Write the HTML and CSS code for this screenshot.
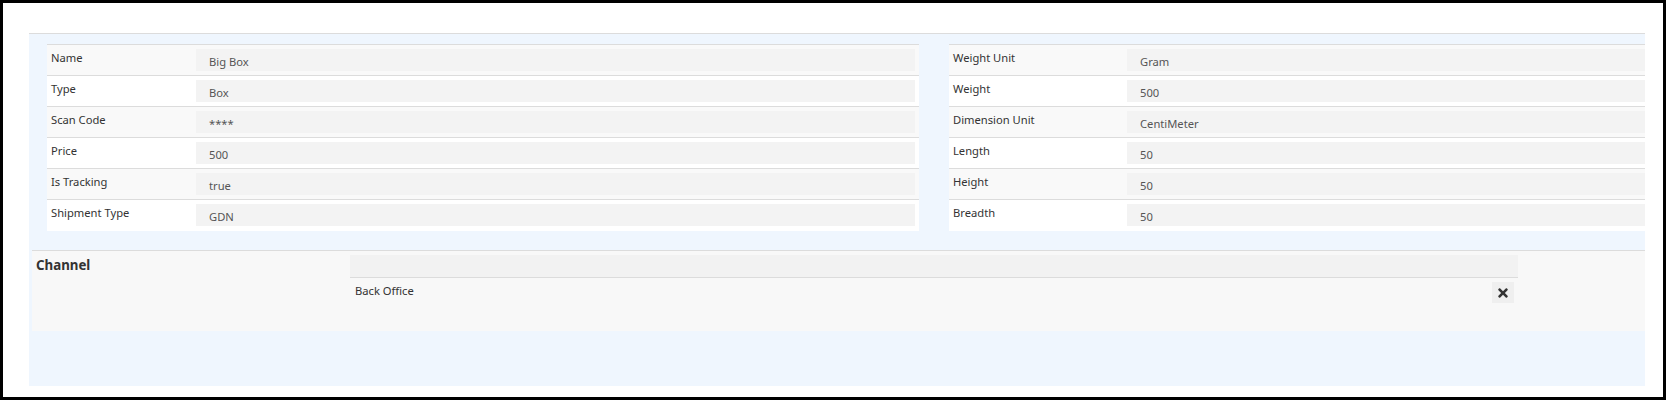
FILE: index.html
```html
<!DOCTYPE html>
<html>
<head>
<meta charset="utf-8">
<link rel="stylesheet" href="styles.css">
</head>
<body>
<div class="frame">
  <div class="panel">
    <div class="details">
      <table class="grid grid-left">
        <tr><td class="lbl">Name</td><td class="val"><div class="box">Big Box</div></td></tr>
        <tr><td class="lbl">Type</td><td class="val"><div class="box">Box</div></td></tr>
        <tr><td class="lbl">Scan Code</td><td class="val"><div class="box">****</div></td></tr>
        <tr><td class="lbl">Price</td><td class="val"><div class="box">500</div></td></tr>
        <tr><td class="lbl">Is Tracking</td><td class="val"><div class="box">true</div></td></tr>
        <tr><td class="lbl">Shipment Type</td><td class="val"><div class="box">GDN</div></td></tr>
      </table>
      <table class="grid grid-right">
        <tr><td class="lbl">Weight Unit</td><td class="val"><div class="box">Gram</div></td></tr>
        <tr><td class="lbl">Weight</td><td class="val"><div class="box">500</div></td></tr>
        <tr><td class="lbl">Dimension Unit</td><td class="val"><div class="box">CentiMeter</div></td></tr>
        <tr><td class="lbl">Length</td><td class="val"><div class="box">50</div></td></tr>
        <tr><td class="lbl">Height</td><td class="val"><div class="box">50</div></td></tr>
        <tr><td class="lbl">Breadth</td><td class="val"><div class="box">50</div></td></tr>
      </table>
    </div>
    <div class="channel">
      <div class="channel-title">Channel</div>
      <div class="channel-table">
        <div class="channel-head"></div>
        <div class="channel-row">
          <span class="channel-name">Back Office</span>
          <button class="remove" type="button" aria-label="Remove">
            <svg viewBox="0 0 352 512" width="10" height="14"><path fill="#333" d="M242.72 256l100.07-100.07c12.28-12.28 12.28-32.19 0-44.48l-22.24-22.24c-12.28-12.28-32.19-12.28-44.48 0L176 189.28 75.93 89.21c-12.28-12.28-32.19-12.28-44.48 0L9.21 111.45c-12.28 12.28-12.28 32.19 0 44.48L109.28 256 9.21 356.07c-12.28 12.28-12.28 32.19 0 44.48l22.24 22.24c12.28 12.28 32.2 12.28 44.48 0L176 322.72l100.07 100.07c12.28 12.28 32.2 12.28 44.48 0l22.24-22.24c12.28-12.28 12.28-32.19 0-44.48L242.72 256z"/></svg>
          </button>
        </div>
      </div>
    </div>
  </div>
</div>
</body>
</html>
```

FILE: styles.css
```css
html, body {
  margin: 0;
  padding: 0;
  background: #fff;
}

body {
  font-family: "Segoe UI", "Noto Sans", "Open Sans", sans-serif;
  color: #333;
}

.frame {
  width: 1666px;
  height: 400px;
  box-sizing: border-box;
  border: 3px solid #000;
  padding: 30px 18px 10px 26px;
}

.panel {
  height: 353px;
  box-sizing: border-box;
  background: #eff6fe;
  border-top: 1px solid #dcdcdc;
  display: flex;
  flex-direction: column;
}

.details {
  display: flex;
  gap: 30px;
  box-sizing: border-box;
  padding: 10px 0 0 18px;
  height: 216px;
  flex: none;
}

.grid {
  border-collapse: collapse;
  border-spacing: 0;
  background: #fff;
  table-layout: fixed;
  height: 186px;
}

.grid-left {
  width: 872px;
}

.grid-right {
  flex: 1;
}

.grid tr {
  border-top: 1px solid #dcdcdc;
  height: 31px;
}

.grid tr:nth-child(odd) {
  background: #f9f9f9;
}

.grid tr:nth-child(even) {
  background: #fff;
}

.lbl {
  vertical-align: top;
  padding: 5px 4px 0 4px;
  font-size: 11.2px;
  line-height: 16px;
  color: #333;
  white-space: nowrap;
}

.grid-left .lbl {
  width: 141px;
}

.grid-right .lbl {
  width: 170px;
}

.val {
  padding: 4px 4px 4px 0;
  vertical-align: top;
}

.grid-right .val {
  padding-right: 0;
}

.box {
  height: 22px;
  box-sizing: border-box;
  background: #f3f3f3;
  padding: 5px 13px 0;
  font-size: 11.2px;
  line-height: 16px;
  color: #555;
}

.channel {
  margin-left: 3px;
  height: 81px;
  flex: none;
  box-sizing: border-box;
  border-top: 1px solid #dcdcdc;
  background: #f8f8f8;
  display: flex;
}

.channel-title {
  width: 318px;
  box-sizing: border-box;
  padding: 4px 0 0 4px;
  font-size: 13.3px;
  font-weight: bold;
  line-height: 20px;
  color: #333;
}

.channel-table {
  width: 1168px;
  padding-top: 4px;
}

.channel-head {
  height: 22px;
  background: #f2f2f2;
  border-bottom: 1px solid #dcdcdc;
}

.channel-row {
  display: flex;
  align-items: flex-start;
  justify-content: space-between;
  padding: 4px 4px 0 5px;
}

.channel-name {
  font-size: 11.2px;
  line-height: 18px;
  color: #333;
}

.remove {
  width: 22px;
  height: 21px;
  margin: 0;
  padding: 0;
  border: none;
  background: #efefef;
  display: flex;
  align-items: center;
  justify-content: center;
}

.remove svg {
  display: block;
}
```
